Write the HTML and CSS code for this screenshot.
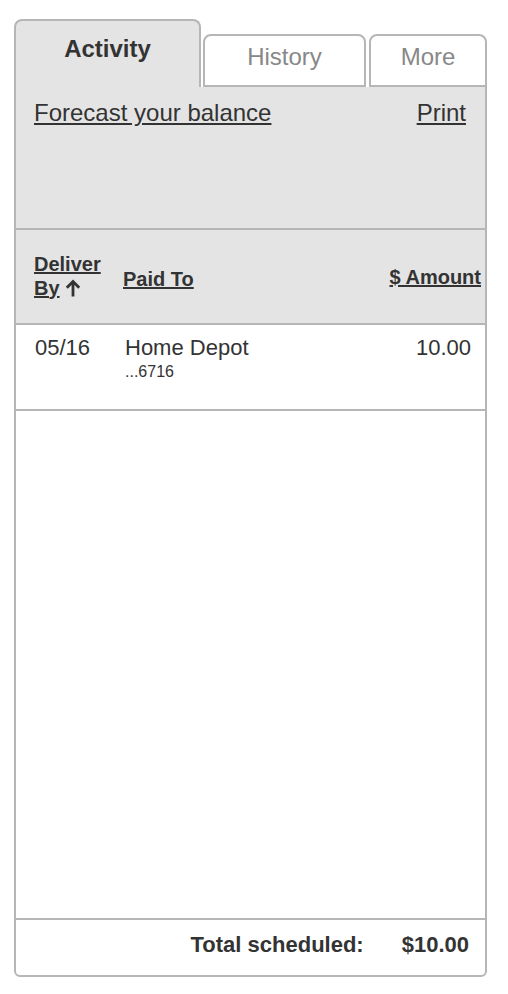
FILE: index.html
```html
<!DOCTYPE html>
<html>
<head>
<meta charset="utf-8">
<link rel="stylesheet" href="styles.css">
</head>
<body>
<div class="widget">
  <div class="tabs">
    <div class="tab tab-active">Activity</div>
    <div class="tab tab-history">History</div>
    <div class="tab tab-more">More</div>
  </div>
  <div class="panel">
    <a class="link">Forecast your balance</a>
    <a class="link">Print</a>
  </div>
  <div class="thead">
    <div class="th th-deliver"><a class="hlink">Deliver</a><br><a class="hlink">By</a> <svg class="arrow" width="16" height="18" viewBox="0 0 16 18"><path d="M8 17.5V2.5M1.8 8.7L8 2.5L14.2 8.7" fill="none" stroke="#333" stroke-width="2.8"/></svg></div>
    <div class="th th-paid"><a class="hlink">Paid To</a></div>
    <div class="th th-amount"><a class="hlink">$ Amount</a></div>
  </div>
  <div class="row">
    <div class="cell cell-date">05/16</div>
    <div class="cell cell-payee">Home Depot<div class="acct">...6716</div></div>
    <div class="cell cell-amount">10.00</div>
  </div>
  <div class="spacer"></div>
  <div class="footer">
    <span class="total-label">Total scheduled:</span>
    <span class="total-value">$10.00</span>
  </div>
</div>
</body>
</html>
```
FILE: styles.css
```css
html, body {
  margin: 0;
  padding: 0;
  background: #fff;
}
body {
  font-family: "Liberation Sans", Arial, sans-serif;
  color: #333;
}
.widget {
  width: 473px;
  margin: 19px 0 0 14px;
  height: 958px;
  display: flex;
  flex-direction: column;
}
.tabs {
  display: flex;
  align-items: flex-end;
  height: 68px;
}
.tab {
  box-sizing: border-box;
  border: 2px solid #b6b6b6;
  border-radius: 8px 8px 0 0;
  text-align: center;
  font-size: 24px;
  line-height: 28px;
}
.tab-active {
  width: 187px;
  height: 68px;
  border-bottom: none;
  background: #e4e4e4;
  font-weight: bold;
  padding-top: 14px;
  color: #333;
}
.tab-history {
  width: 163px;
  margin-left: 2px;
  height: 53px;
  padding-top: 7px;
  color: #888;
  background: #fff;
}
.tab-more {
  width: 118px;
  margin-left: 3px;
  height: 53px;
  padding-top: 7px;
  color: #888;
  background: #fff;
}
.panel {
  box-sizing: border-box;
  background: #e4e4e4;
  border-left: 2px solid #b6b6b6;
  border-right: 2px solid #b6b6b6;
  border-bottom: 2px solid #b6b6b6;
  height: 143px;
  display: flex;
  justify-content: space-between;
  align-items: flex-start;
  padding: 12px 19px 0 18px;
  font-size: 24px;
  line-height: 28px;
}
.link {
  text-decoration: underline;
  color: #333;
}
.thead {
  box-sizing: border-box;
  height: 95px;
  background: #e4e4e4;
  border-left: 2px solid #b6b6b6;
  border-right: 2px solid #b6b6b6;
  border-bottom: 2px solid #b6b6b6;
  display: grid;
  grid-template-columns: 89px 1fr auto;
  align-items: center;
  padding: 0 4px 0 18px;
  font-size: 20px;
  font-weight: bold;
  line-height: 24px;
}
.hlink {
  text-decoration: underline;
  color: #333;
}
.th-deliver {
  margin-top: -2px;
}
.th-paid {
  padding-top: 4px;
}
.arrow {
  vertical-align: -2px;
}
.row {
  box-sizing: border-box;
  height: 86px;
  border-left: 2px solid #b6b6b6;
  border-right: 2px solid #b6b6b6;
  border-bottom: 2px solid #b6b6b6;
  display: grid;
  grid-template-columns: 90px 1fr auto;
  align-items: start;
  padding: 9px 14px 0 19px;
  font-size: 22px;
  line-height: 28px;
}
.acct {
  font-size: 16px;
  line-height: 20px;
}
.spacer {
  flex: 1;
  border-left: 2px solid #b6b6b6;
  border-right: 2px solid #b6b6b6;
}
.footer {
  box-sizing: border-box;
  height: 59px;
  border: 2px solid #b6b6b6;
  border-radius: 0 0 6px 6px;
  display: flex;
  justify-content: flex-end;
  padding: 12px 16px 0 0;
  font-size: 22px;
  line-height: 26px;
  font-weight: bold;
}
.total-value {
  margin-left: 38px;
}
```
